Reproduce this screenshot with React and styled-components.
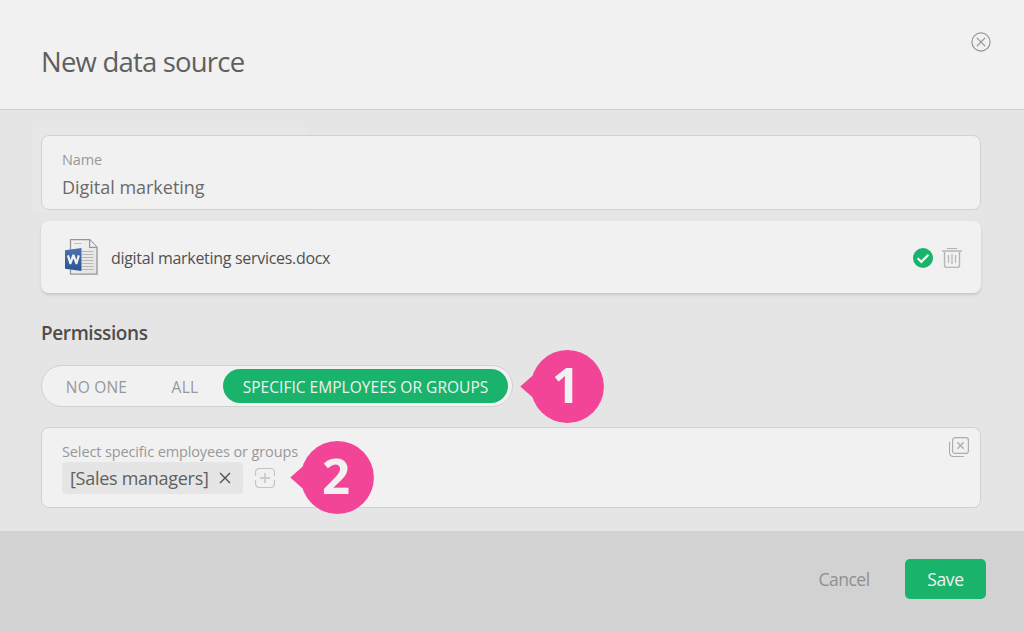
import { useState } from "react";
import styled, { createGlobalStyle } from "styled-components";

const permissionOptions = [
  { id: "none", label: "NO ONE", width: 101, spacing: 0.2 },
  { id: "all", label: "ALL", width: 76, spacing: 0.3 },
  {
    id: "specific",
    label: "SPECIFIC EMPLOYEES OR GROUPS",
    width: 285,
    spacing: 0.03,
  },
];

const CloseIcon = () => (
  <svg width="20" height="20" viewBox="0 0 20 20" fill="none">
    <circle cx="10" cy="10" r="9.1" stroke="#969696" strokeWidth="1.2" />
    <path d="M5.9 5.9l8.2 8.2M14.1 5.9l-8.2 8.2" stroke="#969696" strokeWidth="1.3" />
  </svg>
);

const WordIcon = () => (
  <svg width="34" height="38" viewBox="0 0 34 38">
    <defs>
      <linearGradient id="wordBlue" x1="0" y1="0" x2="0" y2="1">
        <stop offset="0" stopColor="#4a72b0" />
        <stop offset="1" stopColor="#2c5394" />
      </linearGradient>
      <linearGradient id="paper" x1="0" y1="0" x2="1" y2="1">
        <stop offset="0" stopColor="#f3f3f3" />
        <stop offset="1" stopColor="#e2e2e2" />
      </linearGradient>
    </defs>
    <path
      d="M5.5 1.6h19.2l7.3 7.6v26.9H5.5z"
      fill="url(#paper)"
      stroke="#969696"
      strokeWidth="1.3"
    />
    <path d="M24.6 1.9v7.4h7.2" fill="#f0f0f0" stroke="#969696" strokeWidth="1.2" />
    <path d="M9 5.5h7.5" stroke="#bdbdbd" />
    <path
      d="M17 13.5h11.5M17 16.5h11.5M17 19.5h11.5M17 22.5h11.5M17 25.5h11.5M17 28.5h11.5M17 31.5h11.5"
      stroke="#b8b8b8"
      strokeWidth="1.2"
    />
    <path d="M0 12.2L16.5 10v23L0 30.8z" fill="url(#wordBlue)" />
    <path
      d="M3 17.4l2.3 7.8h0.2l2.7-7.6h0.4l2.7 7.6h0.2l2.3-7.8"
      fill="none"
      stroke="#f1f1f1"
      strokeWidth="2.2"
    />
  </svg>
);

const DoneIcon = () => (
  <svg width="20" height="20" viewBox="0 0 20 20" fill="none">
    <circle cx="10" cy="10" r="10" fill="#19b36b" />
    <path d="M4.6 10.2l3.7 3.7 7.2-7.2" stroke="#f1f1f1" strokeWidth="2.2" />
  </svg>
);

const TrashIcon = () => (
  <svg width="20" height="20" viewBox="0 0 20 20" fill="none" stroke="#b5b5b5">
    <path d="M5 0.5h10" strokeWidth="1.2" />
    <path d="M0 3h20" strokeWidth="2" stroke="#c4c4c4" />
    <path d="M2.5 4v13.3q0 2.2 2.2 2.2h10.6q2.2 0 2.2-2.2V4" strokeWidth="1.4" />
    <path d="M6.5 7v8M13.5 7v8" strokeWidth="1.2" />
    <path d="M10 6v10" strokeWidth="2" stroke="#cdcdcd" />
  </svg>
);

const AddIcon = () => (
  <svg width="20" height="20" viewBox="0 0 20 20" fill="none" stroke="#c4c4c4">
    <path
      d="M0.5 8V4.5q0-4 4-4h11q4 0 4 4V8M0.5 12v3.5q0 4 4 4h11q4 0 4-4V12"
      strokeWidth="1.2"
    />
    <path d="M10 5v10M5 10h10" strokeWidth="1.8" stroke="#cbcbcb" />
  </svg>
);

const ClearAllIcon = () => (
  <svg width="20" height="20" viewBox="0 0 20 20" fill="none" stroke="#adadad">
    <rect x="3.6" y="0.6" width="15.8" height="15.8" rx="2.5" strokeWidth="1.2" />
    <path d="M0.5 5v10.5q0 4 4 4H15" strokeWidth="1.2" />
    <path d="M8.3 5.3l6.4 6.4M14.7 5.3l-6.4 6.4" strokeWidth="1.4" />
  </svg>
);

const RemoveIcon = () => (
  <svg width="12" height="12" viewBox="0 0 12 12" stroke="#4f4f4f">
    <path d="M1 1l10 10M11 1L1 11" strokeWidth="1.4" />
  </svg>
);

const StepMarker = ({ number, left, top }) => (
  <Marker $left={left} $top={top}>
    <svg width="84" height="73" viewBox="0 0 84 73" fill="#f34597">
      <circle cx="47.4" cy="36.5" r="36.5" />
      <path d="M0.3 36.5L13.5 24.8v23.4z" />
    </svg>
    <MarkerNumber>{number}</MarkerNumber>
  </Marker>
);

const App = () => {
  const [permission, setPermission] = useState("specific");

  return (
    <>
      <GlobalStyle />
      <Page>
        <Header>
          <Title>New data source</Title>
          <IconButton aria-label="Close">
            <CloseIcon />
          </IconButton>
        </Header>
        <Content>
          <NameField>
            <Label>Name</Label>
            <Value>Digital marketing</Value>
          </NameField>
          <FileCard>
            <WordIcon />
            <FileName>digital marketing services.docx</FileName>
            <FileActions>
              <DoneIcon />
              <IconButton aria-label="Delete">
                <TrashIcon />
              </IconButton>
            </FileActions>
          </FileCard>
          <SectionTitle>Permissions</SectionTitle>
          <Switcher>
            {permissionOptions.map((option) => (
              <Option
                key={option.id}
                $active={option.id === permission}
                $width={option.width}
                $spacing={option.spacing}
                onClick={() => setPermission(option.id)}
              >
                {option.label}
              </Option>
            ))}
            <StepMarker number={1} left={478} top={-16} />
          </Switcher>
          <GroupField>
            <GroupBody>
              <Label>Select specific employees or groups</Label>
              <TagRow>
                <Tag>
                  <TagText>[Sales managers]</TagText>
                  <RemoveIcon />
                </Tag>
                <IconButton aria-label="Add">
                  <AddIcon />
                </IconButton>
              </TagRow>
            </GroupBody>
            <IconButton aria-label="Clear all">
              <ClearAllIcon />
            </IconButton>
            <StepMarker number={2} left={248} top={13} />
          </GroupField>
        </Content>
        <Footer>
          <CancelButton>Cancel</CancelButton>
          <SaveButton>Save</SaveButton>
        </Footer>
      </Page>
    </>
  );
};

const GlobalStyle = createGlobalStyle`
  * {
    box-sizing: border-box;
  }

  body {
    margin: 0;
    font-family: "Open Sans", "Noto Sans", sans-serif;
  }

  button {
    font-family: inherit;
    border: none;
    background: none;
    padding: 0;
    cursor: pointer;
  }

  svg {
    display: block;
    flex-shrink: 0;
  }
`;

const Page = styled.div`
  display: flex;
  flex-direction: column;
  width: 1024px;
  height: 632px;
  background-color: #e5e5e5;
  overflow: hidden;
`;

const Header = styled.header`
  display: flex;
  justify-content: space-between;
  align-items: flex-start;
  height: 110px;
  padding: 32px 33px 0 41px;
  background-color: #f1f1f1;
  border-bottom: 1px solid #cfcfcf;
`;

const Title = styled.h1`
  margin: 10px 0 0;
  font-size: 27.5px;
  line-height: 40px;
  font-weight: 400;
  letter-spacing: -0.8px;
  color: #5f5f5f;
`;

const IconButton = styled.button`
  display: flex;
  flex-shrink: 0;
`;

const Content = styled.main`
  position: relative;
  z-index: 0;
  display: flex;
  flex-direction: column;
  flex: 1;
  padding: 25px 43px 0 41px;
`;

const Field = styled.div`
  position: relative;
  background-color: #f1f1f1;
  border: 1px solid #d1d1d1;
  border-radius: 8px;
`;

// soft highlight behind the left part of the name field
const NameField = styled(Field)`
  height: 75px;
  padding: 14px 20px 0;

  &::before {
    content: "";
    position: absolute;
    z-index: -1;
    left: -9px;
    top: -9px;
    width: 275px;
    height: 86px;
    background-color: #e7e7e7;
  }
`;

const Label = styled.div`
  font-size: 14.5px;
  line-height: 20px;
  letter-spacing: -0.12px;
  color: #989898;
  white-space: nowrap;
`;

const Value = styled.div`
  margin-top: 4px;
  font-size: 18px;
  line-height: 26px;
  letter-spacing: -0.02px;
  color: #6a6a6a;
`;

const FileCard = styled.div`
  display: flex;
  align-items: center;
  height: 72px;
  margin-top: 11px;
  padding: 0 19px 0 24px;
  background-color: #f1f1f1;
  border-radius: 8px;
  box-shadow: 0 2px 3px rgba(0, 0, 0, 0.13);
`;

const FileName = styled.div`
  flex: 1;
  margin-left: 12px;
  padding-top: 2px;
  font-size: 16px;
  letter-spacing: -0.3px;
  color: #505050;
`;

const FileActions = styled.div`
  display: flex;
  gap: 9px;
  padding-top: 2px;
`;

const SectionTitle = styled.h2`
  margin: 27px 0 19px;
  font-size: 19px;
  line-height: 26px;
  font-weight: 600;
  letter-spacing: -0.4px;
  color: #4d4d4d;
`;

const Switcher = styled.div`
  position: relative;
  display: flex;
  align-self: flex-start;
  width: 472px;
  height: 42px;
  padding: 3px 4px;
  background-color: #f1f1f1;
  border: 1px solid #d1d1d1;
  border-radius: 21px;
`;

const Option = styled.button`
  flex-shrink: 0;
  width: ${({ $width }) => $width}px;
  height: 34px;
  padding-top: 2px;
  border-radius: 17px;
  font-size: 15.5px;
  letter-spacing: ${({ $spacing }) => $spacing}px;
  white-space: nowrap;
  color: ${({ $active }) => ($active ? "#f1f1f1" : "#989898")};
  background-color: ${({ $active }) => ($active ? "#19b36b" : "transparent")};
`;

const GroupField = styled(Field)`
  display: flex;
  justify-content: space-between;
  align-items: flex-start;
  height: 81px;
  margin-top: 20px;
  padding: 9px 11px 0 20px;
`;

const GroupBody = styled.div`
  padding-top: 5px;
`;

const TagRow = styled.div`
  display: flex;
  align-items: center;
  gap: 12px;
`;

const Tag = styled.div`
  display: flex;
  align-items: center;
  justify-content: space-between;
  width: 181px;
  height: 32px;
  padding: 0 12px 0 8px;
  background-color: #e5e5e5;
  border-radius: 4px;
`;

const TagText = styled.span`
  font-size: 18px;
  letter-spacing: -0.28px;
  white-space: nowrap;
  color: #606060;
`;

const Marker = styled.div`
  position: absolute;
  left: ${({ $left }) => $left}px;
  top: ${({ $top }) => $top}px;
`;

const MarkerNumber = styled.span`
  position: absolute;
  left: 11px;
  top: -1px;
  width: 70px;
  line-height: 70px;
  font-size: 49px;
  font-weight: 700;
  text-align: center;
  color: #f1f1f1;
`;

const Footer = styled.footer`
  display: flex;
  justify-content: flex-end;
  align-items: flex-start;
  height: 101px;
  padding: 28px 38px 0 0;
  background-color: #d2d2d2;
`;

const CancelButton = styled.button`
  width: 52px;
  height: 40px;
  margin-right: 35px;
  font-size: 17.5px;
  letter-spacing: -0.5px;
  color: #8f8f8f;
`;

const SaveButton = styled.button`
  width: 81px;
  height: 40px;
  border-radius: 5px;
  font-size: 17.5px;
  letter-spacing: -0.4px;
  color: #f1f1f1;
  background-color: #19b36b;
`;

export default App;
